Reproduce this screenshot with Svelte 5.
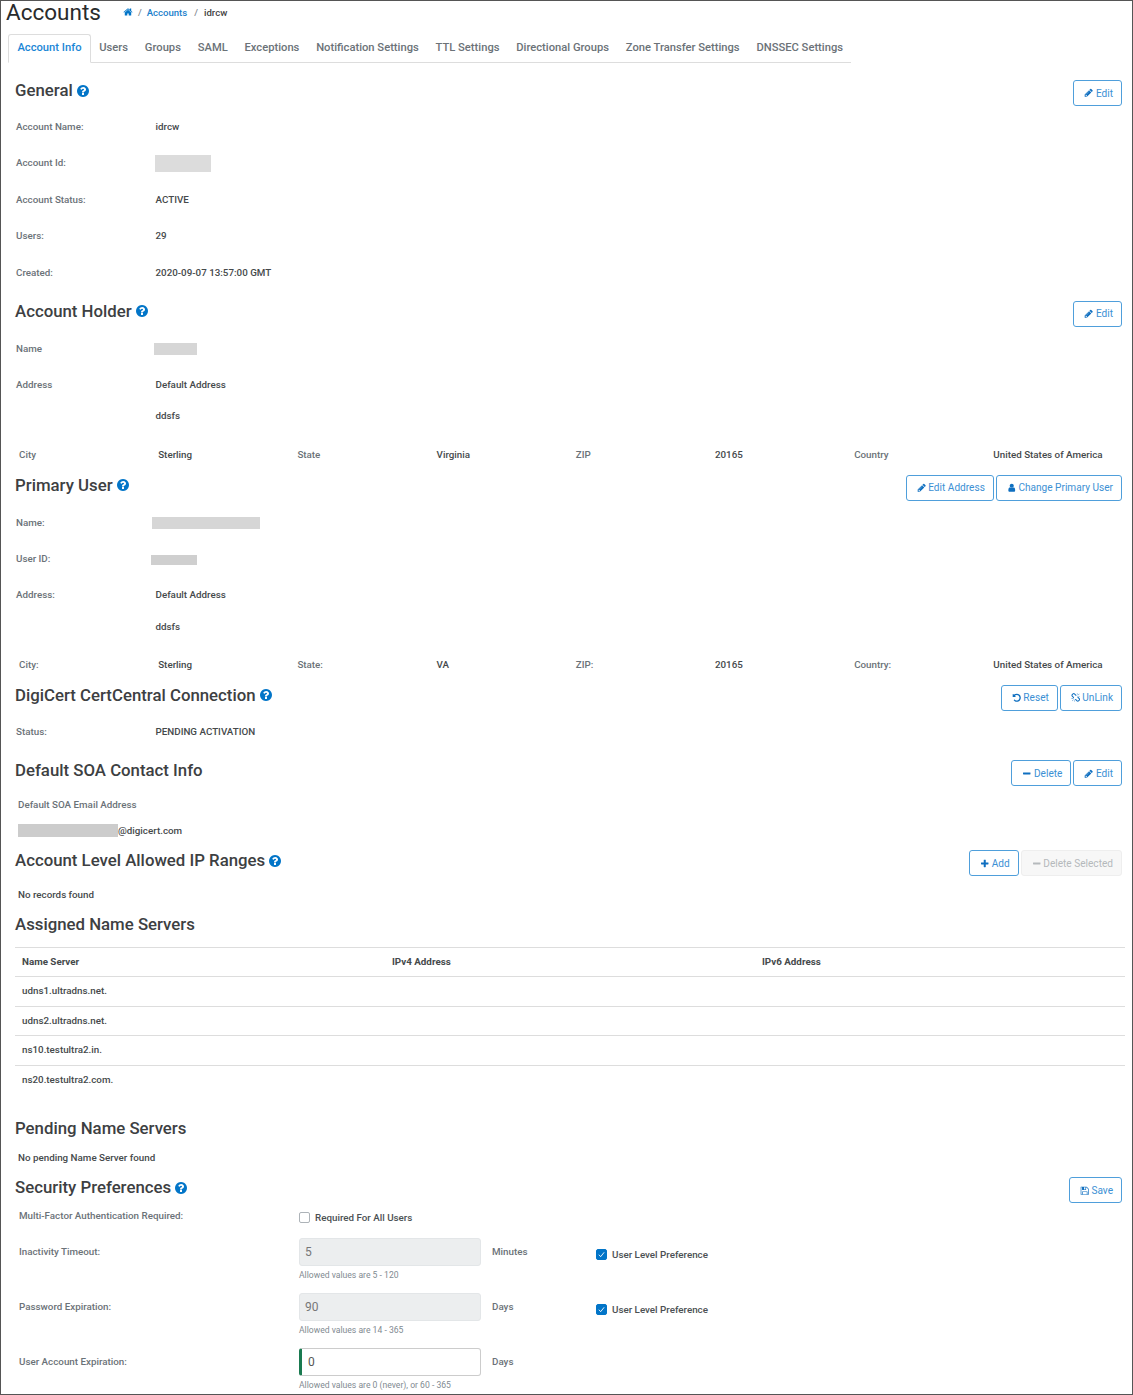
<script>
  const icons = {
    home: "M1472 992v480q0 26-19 45t-45 19h-384v-384h-256v384h-384q-26 0-45-19t-19-45v-480q0-1 .5-3t.5-3l575-474 575 474q1 2 1 6zm223-69l-62 74q-8 9-21 11h-3q-13 0-21-7l-692-577-692 577q-12 8-24 7-13-2-21-11l-62-74q-8-10-7-23.5t11-21.5l719-599q32-26 76-26t76 26l244 204v-195q0-14 9-23t23-9h192q14 0 23 9t9 23v408l219 182q10 8 11 21.5t-7 23.5z",
    help: "M1024 1376v-192q0-14-9-23t-23-9h-192q-14 0-23 9t-9 23v192q0 14 9 23t23 9h192q14 0 23-9t9-23zm256-672q0-88-55.5-163t-138.5-116-170-41q-243 0-371 213-15 24 8 42l132 100q7 6 19 6 16 0 25-12 53-68 86-92 34-24 86-24 48 0 85.5 26t37.5 59q0 38-20 61t-68 45q-63 28-115.5 86.5t-52.5 125.5v36q0 14 9 23t23 9h192q14 0 23-9t9-23q0-19 21.5-49.5t54.5-49.5q32-18 49-28.5t46-35 44.5-48 28-60.5 12.5-81zm384 192q0 209-103 385.5t-279.5 279.5-385.5 103-385.5-103-279.5-279.5-103-385.5 103-385.5 279.5-279.5 385.5-103 385.5 103 279.5 279.5 103 385.5z",
    pencil: "M491 1536l91-91-235-235-91 91v107h128v128h107zm523-928q0-22-22-22-10 0-17 7l-542 542q-7 7-7 17 0 22 22 22 10 0 17-7l542-542q7-7 7-17zm-54-192l416 416-832 832h-416v-416zm683 96q0 53-37 90l-166 166-416-416 166-165q36-38 90-38 53 0 91 38l235 234q37 39 37 91z",
    user: "M1536 1399q0 109-62.5 187t-150.5 78h-854q-88 0-150.5-78t-62.5-187q0-85 8.5-160.5t31.5-152 58.5-131 94-89 134.5-34.5q131 128 313 128t313-128q76 0 134.5 34.5t94 89 58.5 131 31.5 152 8.5 160.5zm-256-887q0 159-112.5 271.5t-271.5 112.5-271.5-112.5-112.5-271.5 112.5-271.5 271.5-112.5 271.5 112.5 112.5 271.5z",
    undo: "M1664 896q0 156-61 298t-164 245-245 164-298 61q-172 0-327-72.5t-264-204.5q-7-10-6.5-22.5t8.5-20.5l137-138q10-9 25-9 16 2 23 12 73 95 179 147t225 52q104 0 198.5-40.5t163.5-109.5 109.5-163.5 40.5-198.5-40.5-198.5-109.5-163.5-163.5-109.5-198.5-40.5q-98 0-188 35.5t-160 101.5l137 138q31 30 14 69-17 40-59 40h-448q-26 0-45-19t-19-45v-448q0-42 40-59 39-17 69 14l130 129q107-101 244.5-156.5t284.5-55.5q156 0 298 61t245 164 164 245 61 298z",
    unlink: "M503 1271l-256 256q-10 9-23 9-12 0-23-9-9-10-9-23t9-23l256-256q10-9 23-9t23 9q9 10 9 23t-9 23zm169 41v320q0 14-9 23t-23 9-23-9-9-23v-320q0-14 9-23t23-9 23 9 9 23zm-224-224q0 14-9 23t-23 9h-320q-14 0-23-9t-9-23 9-23 23-9h320q14 0 23 9t9 23zm1264 128q0 120-85 203l-147 146q-83 83-203 83-121 0-204-85l-334-335q-21-21-42-56l239-18 273 274q27 27 68 27.5t68-26.5l147-146q28-28 28-67 0-40-28-68l-274-275 18-239q35 21 56 42l336 336q84 86 84 204zm-617-724l-239 18-273-274q-28-28-68-28-39 0-68 27l-147 146q-28 28-28 67 0 40 28 68l274 274-18 240q-35-21-56-42l-336-336q-84-86-84-204 0-120 85-203l147-146q83-83 203-83 121 0 204 85l334 335q21 21 42 56zm633 84q0 14-9 23t-23 9h-320q-14 0-23-9t-9-23 9-23 23-9h320q14 0 23 9t9 23zm-544-544v320q0 14-9 23t-23 9-23-9-9-23v-320q0-14 9-23t23-9 23 9 9 23zm407 151l-256 256q-11 9-23 9t-23-9q-9-10-9-23t9-23l256-256q10-9 23-9t23 9q9 10 9 23t-9 23z",
    minus: "M1600 736v192q0 40-28 68t-68 28h-1216q-40 0-68-28t-28-68v-192q0-40 28-68t68-28h1216q40 0 68 28t28 68z",
    plus: "M1600 736v192q0 40-28 68t-68 28h-416v416q0 40-28 68t-68 28h-192q-40 0-68-28t-28-68v-416h-416q-40 0-68-28t-28-68v-192q0-40 28-68t68-28h416v-416q0-40 28-68t68-28h192q40 0 68 28t28 68v416h416q40 0 68 28t28 68z",
    save: "M512 1536h768v-384h-768v384zm896 0h128v-896q0-14-10-38.5t-20-34.5l-281-281q-10-10-34-20t-39-10v416q0 40-28 68t-68 28h-576q-40 0-68-28t-28-68v-416h-128v1280h128v-416q0-40 28-68t68-28h832q40 0 68 28t28 68v416zm-384-928v-320q0-13-9.5-22.5t-22.5-9.5h-192q-13 0-22.5 9.5t-9.5 22.5v320q0 13 9.5 22.5t22.5 9.5h192q13 0 22.5-9.5t9.5-22.5zm640 32v928q0 40-28 68t-68 28h-1344q-40 0-68-28t-28-68v-1344q0-40 28-68t68-28h928q40 0 88 20t76 48l280 280q28 28 48 76t20 88z"
  };

  const tabs = ["Account Info", "Users", "Groups", "SAML", "Exceptions", "Notification Settings", "TTL Settings", "Directional Groups", "Zone Transfer Settings", "DNSSEC Settings"];
  const general = [
    ["Account Name:", "idrcw"],
    ["Account Id:", null],
    ["Account Status:", "ACTIVE"],
    ["Users:", "29"],
    ["Created:", "2020-09-07 13:57:00 GMT"]
  ];
  const holderCols = [["City", "Sterling"], ["State", "Virginia"], ["ZIP", "20165"], ["Country", "United States of America"]];
  const userCols = [["City:", "Sterling"], ["State:", "VA"], ["ZIP:", "20165"], ["Country:", "United States of America"]];
  const servers = ["udns1.ultradns.net.", "udns2.ultradns.net.", "ns10.testultra2.in.", "ns20.testultra2.com."];
</script>

{#snippet icon(name, cls = "")}
  <svg class="ic {cls}" viewBox="0 0 1792 1792" aria-hidden="true"><path d={icons[name]} /></svg>
{/snippet}

{#snippet head(title, hasHelp, buttons)}
  <div class="head">
    <h2>{title}{#if hasHelp}{@render icon("help", "help")}{/if}</h2>
    <div class="actions">
      {#each buttons as b}
        <button class="btn" class:off={b[2]} type="button">{@render icon(b[0])}{b[1]}</button>
      {/each}
    </div>
  </div>
{/snippet}

{#snippet cols(list)}
  <div class="cols">
    {#each list as c}
      <span class="label">{c[0]}</span>
      <span class="value">{c[1]}</span>
    {/each}
  </div>
{/snippet}

<div class="page">
  <header class="top">
    <h1>Accounts</h1>
    <nav class="crumbs">
      {@render icon("home", "crumb-home")}
      <span class="sep">/</span>
      <span class="link">Accounts</span>
      <span class="sep">/</span>
      <span class="current">idrcw</span>
    </nav>
  </header>

  <div class="tabs">
    {#each tabs as t, i}
      <div class="tab" class:active={i === 0}>{t}</div>
    {/each}
  </div>

  <section class="general">
    {@render head("General", true, [["pencil", "Edit"]])}
    <div class="rows">
      {#each general as r}
        <div class="row">
          <span class="key">{r[0]}</span>
          {#if r[1]}<span class="value">{r[1]}</span>{:else}<span class="mask mask-id"></span>{/if}
        </div>
      {/each}
    </div>
  </section>

  <section>
    {@render head("Account Holder", true, [["pencil", "Edit"]])}
    <div class="rows loose">
      <div class="row"><span class="key">Name</span><span class="mask mask-name"></span></div>
      <div class="row"><span class="key">Address</span><span class="value">Default Address</span></div>
      <div class="row short"><span class="key"></span><span class="value">ddsfs</span></div>
    </div>
    {@render cols(holderCols)}
  </section>

  <section class="tight">
    {@render head("Primary User", true, [["pencil", "Edit Address"], ["user", "Change Primary User"]])}
    <div class="rows loose">
      <div class="row"><span class="key">Name:</span><span class="mask mask-user"></span></div>
      <div class="row"><span class="key">User ID:</span><span class="mask mask-uid"></span></div>
      <div class="row"><span class="key">Address:</span><span class="value">Default Address</span></div>
      <div class="row short"><span class="key"></span><span class="value">ddsfs</span></div>
    </div>
    {@render cols(userCols)}
  </section>

  <section class="tight">
    {@render head("DigiCert CertCentral Connection", true, [["undo", "Reset"], ["unlink", "UnLink"]])}
    <div class="rows">
      <div class="row"><span class="key">Status:</span><span class="value">PENDING ACTIVATION</span></div>
    </div>
  </section>

  <section>
    {@render head("Default SOA Contact Info", false, [["minus", "Delete"], ["pencil", "Edit"]])}
    <div class="soa">
      <div class="soa-label">Default SOA Email Address</div>
      <div class="soa-value"><span class="mask mask-mail"></span><span class="value">@digicert.com</span></div>
    </div>
  </section>

  <section>
    {@render head("Account Level Allowed IP Ranges", true, [["plus", "Add"], ["minus", "Delete Selected", true]])}
    <div class="note records">No records found</div>
  </section>

  <section class="assigned">
    <h2 class="plain">Assigned Name Servers</h2>
    <table>
      <thead>
        <tr><th>Name Server</th><th>IPv4 Address</th><th>IPv6 Address</th></tr>
      </thead>
      <tbody>
        {#each servers as s}
          <tr><td>{s}</td><td></td><td></td></tr>
        {/each}
      </tbody>
    </table>
  </section>

  <section class="pending">
    <h2 class="plain">Pending Name Servers</h2>
    <div class="note">No pending Name Server found</div>
  </section>

  <section>
    {@render head("Security Preferences", true, [["save", "Save"]])}
    <div class="prefs">
      <div class="pref pref-first">
        <span class="pref-label">Multi-Factor Authentication Required:</span>
        <label class="check"><span class="box"></span>Required For All Users</label>
      </div>
      <div class="pref">
        <span class="pref-label">Inactivity Timeout:</span>
        <div class="field">
          <div class="input locked">5</div>
          <small>Allowed values are 5 - 120</small>
        </div>
        <span class="unit">Minutes</span>
        <label class="check level"><span class="box on"><svg viewBox="0 0 12 12"><path d="M2.5 6.3l2.4 2.6 4.6-5.8" /></svg></span>User Level Preference</label>
      </div>
      <div class="pref">
        <span class="pref-label">Password Expiration:</span>
        <div class="field">
          <div class="input locked">90</div>
          <small>Allowed values are 14 - 365</small>
        </div>
        <span class="unit">Days</span>
        <label class="check level"><span class="box on"><svg viewBox="0 0 12 12"><path d="M2.5 6.3l2.4 2.6 4.6-5.8" /></svg></span>User Level Preference</label>
      </div>
      <div class="pref">
        <span class="pref-label">User Account Expiration:</span>
        <div class="field">
          <div class="input valid">0</div>
          <small>Allowed values are 0 (never), or 60 - 365</small>
        </div>
        <span class="unit">Days</span>
      </div>
    </div>
  </section>
</div>

<style>
  :global(body) {
    margin: 0;
    background: #fff;
  }

  .page {
    box-sizing: border-box;
    height: 1395px;
    overflow: hidden;
    border: 1px solid #555;
    font-family: Roboto, "Liberation Sans", sans-serif;
    font-size: 9.8px;
    color: #373a3c;
  }

  /* title + breadcrumb */
  .top {
    display: flex;
    align-items: center;
    height: 33px;
    padding: 0 5px 11px;
    box-sizing: border-box;
  }

  h1 {
    margin: 0;
    font-size: 22.5px;
    font-weight: 400;
    line-height: 22px;
    color: #292b2c;
  }

  .crumbs {
    display: flex;
    align-items: center;
    gap: 5px;
    margin-left: 22px;
    font-size: 9.6px;
    font-weight: 500;
  }

  .crumb-home {
    width: 10px;
    height: 10px;
    fill: #0275c8;
  }

  .sep {
    color: #818a91;
  }

  .link {
    margin-right: 2px;
    color: #1a7fcb;
  }

  .current {
    margin-left: 1px;
    color: #444;
  }

  /* tabs */
  .tabs {
    display: flex;
    width: 843px;
    height: 28px;
    margin-left: 7px;
    border-bottom: 1px solid #ddd;
  }

  .tab {
    box-sizing: border-box;
    height: 28px;
    padding: 7px 8.4px 0;
    font-size: 11.2px;
    font-weight: 500;
    line-height: 14px;
    color: #6b7278;
    white-space: nowrap;
  }

  .tab.active {
    height: 29px;
    padding-top: 6px;
    border: 1px solid #ddd;
    border-bottom-color: #fff;
    border-radius: 3px 3px 0 0;
    color: #1a86d6;
  }

  /* sections */
  section {
    margin-top: 10px;
    padding-left: 14px;
  }

  .general {
    margin-top: 17px;
  }

  .tight {
    margin-top: 1px;
  }

  .head {
    display: flex;
    justify-content: space-between;
    height: 26px;
    padding-right: 10px;
  }

  h2 {
    display: flex;
    align-items: center;
    gap: 3px;
    height: 20px;
    margin: 0;
    font-size: 16.8px;
    font-weight: 500;
    line-height: 20px;
    color: #3d4042;
  }

  .help {
    width: 14px;
    height: 14px;
    margin-top: 1px;
    fill: #0275c8;
  }

  .actions {
    display: flex;
    gap: 2px;
  }

  .btn {
    display: flex;
    align-items: center;
    gap: 2px;
    height: 26px;
    padding: 0 8px 0 10px;
    background: #fff;
    border: 1px solid #4f9fdb;
    border-radius: 3px;
    font: inherit;
    font-size: 10.1px;
    color: #3c90d4;
    white-space: nowrap;
  }

  .btn .ic {
    width: 9.5px;
    height: 9.5px;
    fill: #0f6fc0;
  }

  .btn.off {
    background: #f7f7f7;
    border-color: #eee;
    color: #b5b9bc;
  }

  .btn.off .ic {
    fill: #b5b9bc;
  }

  .rows {
    margin-top: 3px;
  }

  .rows.loose {
    margin-top: 4px;
  }

  .row {
    box-sizing: border-box;
    display: flex;
    align-items: center;
    height: 36.4px;
    padding: 0 0 1.5px 1px;
  }

  .row.short {
    height: 26px;
  }

  .key {
    width: 139.5px;
    flex: none;
    font-weight: 500;
    color: #6b7278;
  }

  .value {
    font-weight: 500;
    color: #45494b;
    white-space: nowrap;
  }

  .mask {
    display: block;
    background: #d6d6d6;
  }

  .mask-id {
    width: 56px;
    height: 17px;
    margin: 2px 0 0 -1px;
    background: #dcdcdc;
  }

  .mask-name {
    width: 43px;
    height: 12px;
    margin: 1px 0 0 -2px;
  }

  .mask-user {
    width: 108px;
    height: 12px;
    margin: 2px 0 0 -4px;
  }

  .mask-uid {
    width: 46px;
    height: 10px;
    margin: 2px 0 0 -5px;
    background: #cfcfcf;
  }

  .mask-mail {
    width: 100px;
    height: 13px;
    background: #cccccc;
  }

  /* label/value pairs running across the full width */
  .cols {
    box-sizing: border-box;
    display: grid;
    grid-template-columns: repeat(8, 139.2px);
    align-items: center;
    height: 36px;
    margin-top: 8px;
    padding: 0 0 2px 4px;
  }

  .label {
    font-weight: 500;
    color: #6b7278;
  }

  .soa {
    margin-top: 4px;
    padding: 0 0 1px 3px;
  }

  .soa-label {
    height: 31px;
    line-height: 29px;
    font-weight: 500;
    color: #6b7278;
  }

  .soa-value {
    box-sizing: border-box;
    display: flex;
    align-items: center;
    height: 18px;
  }

  .note {
    padding-left: 3px;
    font-weight: 500;
    color: #45494b;
    height: 19px;
    line-height: 19px;
  }

  .records {
    margin-top: 3px;
    height: 33px;
    line-height: 31px;
  }

  .plain {
    margin-bottom: 3px;
  }

  .assigned {
    margin-top: 1.6px;
  }

  table {
    width: 1110px;
    margin-top: 13px;
    border-collapse: collapse;
    table-layout: fixed;
  }

  th,
  td {
    height: 28.5px;
    padding: 0 7px;
    border-top: 1px solid #ddd;
    text-align: left;
    vertical-align: top;
    font-size: 9.8px;
    font-weight: 500;
    line-height: 27px;
    color: #45494b;
  }

  th {
    font-weight: 700;
  }

  .pending {
    margin-top: 24px;
  }

  .pending .note {
    margin-top: 10px;
  }

  /* security form */
  .prefs {
    margin-top: 1px;
    padding-left: 4px;
  }

  .pref {
    display: flex;
    align-items: flex-start;
    height: 55px;
  }

  .pref-first {
    height: 34px;
  }

  .pref-first .pref-label {
    line-height: 24px;
  }

  .pref-first .check {
    margin-top: 8px;
  }

  .pref-label {
    width: 280px;
    flex: none;
    font-weight: 500;
    line-height: 28px;
    color: #6b7278;
  }

  .field {
    width: 182px;
    flex: none;
  }

  .input {
    box-sizing: border-box;
    height: 28px;
    padding-left: 5px;
    border: 1px solid #e3e6e8;
    border-radius: 3px;
    font-size: 12px;
    line-height: 27px;
    color: #777;
  }

  .input.locked {
    background: #eceeef;
  }

  .input.valid {
    padding-left: 6px;
    border-color: #ccc;
    border-left: 3px solid #1a7a50;
    color: #555;
  }

  small {
    display: block;
    margin-top: 3px;
    font-size: 8.6px;
    line-height: 12px;
    color: #818a91;
  }

  .unit {
    width: 104px;
    flex: none;
    margin-left: 11px;
    font-weight: 500;
    line-height: 28px;
    color: #6b7278;
  }

  .check {
    display: flex;
    align-items: center;
    gap: 5px;
    font-weight: 500;
    color: #4b5053;
    white-space: nowrap;
  }

  .check.level {
    margin-top: 11px;
  }

  .box {
    box-sizing: border-box;
    display: block;
    width: 11px;
    height: 11px;
    background: #fff;
    border: 1px solid #adb3b8;
    border-radius: 2px;
  }

  .box.on {
    background: #0275c8;
    border-color: #0275c8;
  }

  .box svg {
    display: block;
    width: 9px;
    height: 9px;
    fill: none;
    stroke: #fff;
    stroke-width: 1.2;
  }
</style>
